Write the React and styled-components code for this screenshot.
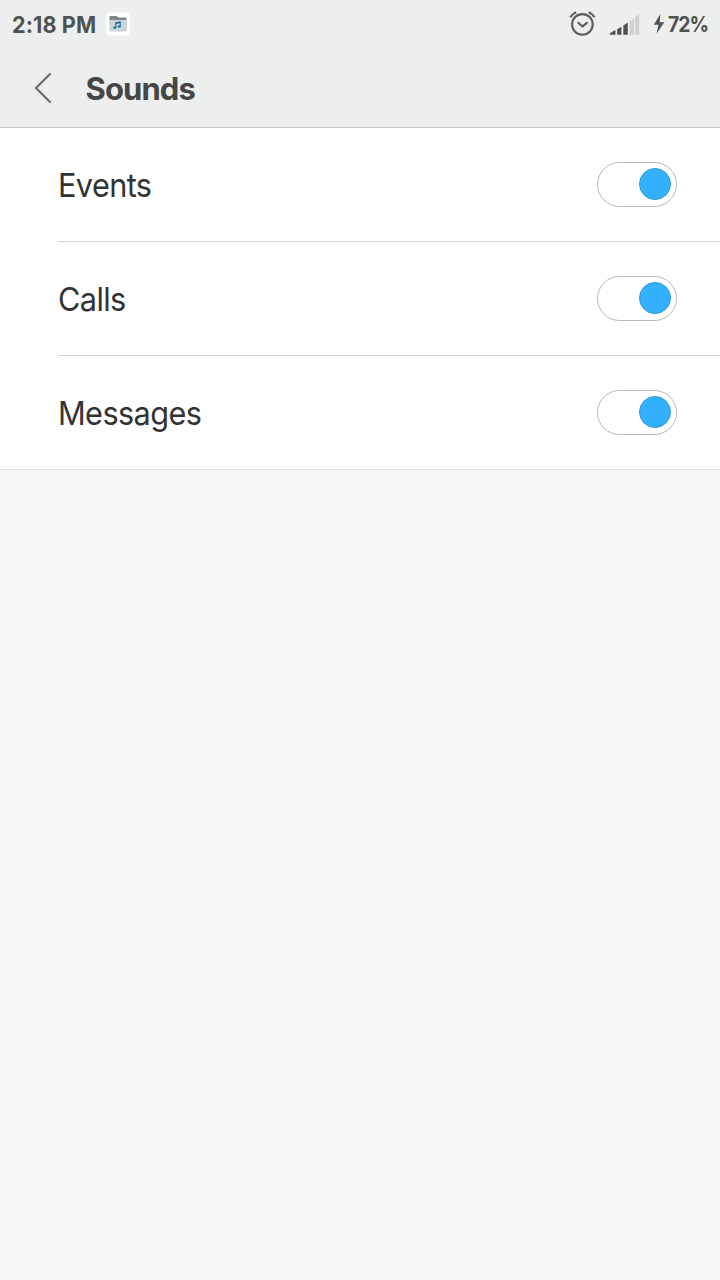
import React from "react";
import styled, { createGlobalStyle } from "styled-components";

const GlobalStyle = createGlobalStyle`
  * { box-sizing: border-box; }
  body {
    margin: 0;
    background: #f7f7f7;
    font-family: Inter, "Liberation Sans", sans-serif;
  }
`;

const Screen = styled.main`
  width: 100%;
  min-height: 100vh;
  background: #f7f7f7;
`;

const Header = styled.header`
  height: 128px;
  background: #edefee;
  border-bottom: 1px solid #c8cac9;
`;

const StatusBar = styled.div`
  display: flex;
  align-items: center;
  height: 48px;
  padding: 0 12px;
  color: #505251;
`;

const Clock = styled.span`
  width: 84px;
  padding-top: 2px;
  margin-left: -0.5px;
  margin-right: 0.5px;
  font-size: 23px;
  font-weight: 700;
  line-height: 28px;
  letter-spacing: 0.1px;
  white-space: nowrap;
  transform: scaleX(0.94);
  transform-origin: left;
`;

const BatteryLevel = styled.span`
  width: 40px;
  padding-top: 2px;
  font-size: 21px;
  font-weight: 700;
  line-height: 28px;
  letter-spacing: -1px;
  white-space: nowrap;
  transform: scaleX(0.92);
  transform-origin: left;
`;

const StatusIcons = styled.div`
  display: flex;
  align-items: center;
  margin-left: auto;
`;

const Icon = styled.svg`
  display: block;
  flex: none;
  margin-left: ${(p) => p.$gap || 0}px;
`;

const TitleBar = styled.div`
  display: flex;
  align-items: center;
  height: 80px;
  padding-left: 33px;
`;

const BackButton = styled.button`
  display: flex;
  width: 52.5px;
  padding: 0;
  border: 0;
  background: none;
`;

const Title = styled.h1`
  margin: 0;
  padding-top: 2px;
  color: #454746;
  font-size: 31px;
  font-weight: 700;
  line-height: 40px;
  letter-spacing: -0.9px;
`;

const SettingsList = styled.section`
  background: #fff;
  padding-left: 57.5px;
  border-bottom: 1px solid #dedede;
`;

const SettingRow = styled.div`
  display: flex;
  align-items: center;
  justify-content: space-between;
  height: ${(p) => (p.$last ? 113 : 114)}px;
  padding-right: 43px;
  border-bottom: ${(p) => (p.$last ? "0" : "1px solid #d4d5d5")};
`;

const Label = styled.span`
  color: #333;
  font-size: 33px;
  font-weight: 400;
  line-height: 40px;
  transform: scaleX(0.93);
  transform-origin: left;
  letter-spacing: -0.65px;
`;

const Switch = styled.button`
  display: flex;
  align-items: center;
  justify-content: flex-end;
  width: 80px;
  height: 45px;
  padding: 0 5px 1px;
  border: 1px solid #b9b9b9;
  border-radius: 23px;
  background: #fff;
`;

const Knob = styled.span`
  width: 32px;
  height: 32px;
  border: 1px solid #2a98df;
  border-radius: 50%;
  background: #33b1ff;
`;

const settings = ["Events", "Calls", "Messages"];

function MusicFolderIcon() {
  return (
    <Icon $gap={10} width="24" height="24" viewBox="0 0 24 24">
      <rect x="0.5" y="0.5" width="23" height="23" rx="3" fill="#fff" />
      <path d="M3.5 4h7l2 1.5h8V9h-17z" fill="#80868a" />
      <path d="M3 8h18v10.5a1 1 0 0 1-1 1H4.5a1 1 0 0 1-1-1z" fill="#ccd5dc" />
      <path d="M9.8 15.5V10.8l4.4-.9v4.6M9.8 11.5l4.4-.9" fill="none" stroke="#18718d" strokeWidth="1.1" />
      <ellipse cx="8.7" cy="15.6" rx="1.6" ry="1.2" fill="#18718d" />
      <ellipse cx="13.1" cy="14.6" rx="1.6" ry="1.2" fill="#18718d" />
    </Icon>
  );
}

function AlarmIcon() {
  return (
    <Icon width="28" height="28" viewBox="0 0 28 28" fill="none" stroke="#5c5e5d" strokeLinecap="round">
      <circle cx="14.4" cy="14.4" r="10.3" strokeWidth="2.1" />
      <path d="M10.3 12.7l4.2 3.8 4.4-3.7" strokeWidth="2.2" strokeLinejoin="round" />
      <path d="M2.2 7.2Q4.2 3.7 8.2 2.2M20.7 2.2Q24.6 3.7 26.6 7.2" strokeWidth="2.2" strokeLinecap="butt" />
    </Icon>
  );
}

function SignalIcon() {
  return (
    <Icon $gap={13} width="31" height="22" viewBox="0 0 31 22" fill="#505251">
      <path d="M0.3 21.8q1.4-3 6.2-4.5v4.5z" />
      <path d="M8.2 16.2l4.2-2.4v8H8.2z" />
      <path d="M14.3 12.6l4.5-3v12.2h-4.5z" />
      <path d="M20.6 8.3l4.3-3v16.5h-4.3z" fill="#cfd0d0" />
      <path d="M26 4.3l4.2-3v20.5H26z" fill="#cfd0d0" />
    </Icon>
  );
}

function BoltIcon() {
  return (
    <Icon $gap={13} width="15" height="22" viewBox="0 0 15 22" fill="#505251">
      <path d="M7.4 1L0.8 11.8h4.7L3.6 20.8 11.3 9.2H6.7z" />
    </Icon>
  );
}

export default function App() {
  return (
    <Screen>
      <GlobalStyle />
      <Header>
        <StatusBar>
          <Clock>2:18 PM</Clock>
          <MusicFolderIcon />
          <StatusIcons>
            <AlarmIcon />
            <SignalIcon />
            <BoltIcon />
            <BatteryLevel>72%</BatteryLevel>
          </StatusIcons>
        </StatusBar>
        <TitleBar>
          <BackButton aria-label="Back">
            <Icon width="20" height="32" viewBox="0 0 20 32" fill="none" stroke="#6d6f6e" strokeWidth="2.2" strokeLinecap="round" strokeLinejoin="round">
              <path d="M17 2L3 16l14 14" />
            </Icon>
          </BackButton>
          <Title>Sounds</Title>
        </TitleBar>
      </Header>
      <SettingsList>
        {settings.map((name, i) => (
          <SettingRow key={name} $last={i === settings.length - 1}>
            <Label>{name}</Label>
            <Switch role="switch" aria-checked="true" aria-label={name}>
              <Knob />
            </Switch>
          </SettingRow>
        ))}
      </SettingsList>
    </Screen>
  );
}
